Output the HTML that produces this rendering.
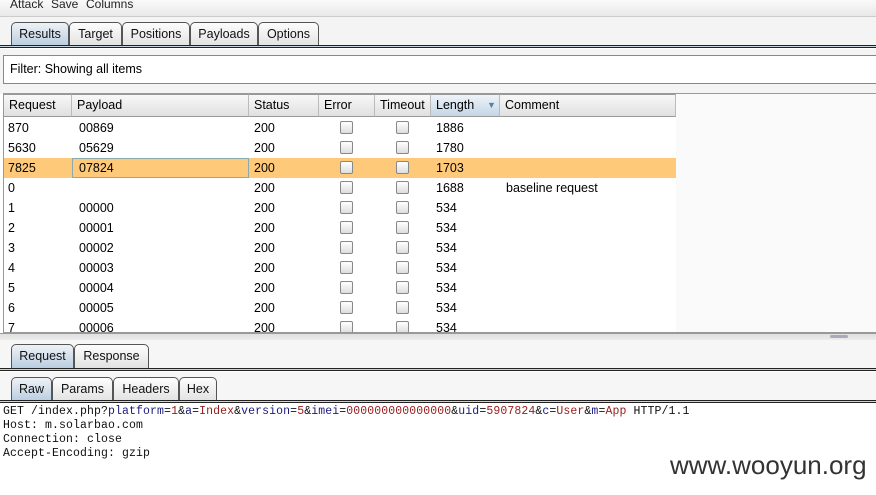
<!DOCTYPE html>
<html><head><style>
*{margin:0;padding:0;box-sizing:border-box}
body{width:876px;height:495px;overflow:hidden;background:#fff;font-family:"Liberation Sans",sans-serif;font-size:12px;color:#000;position:relative}
.abs{position:absolute}
.menu{left:0;top:0;width:876px;height:17px;background:linear-gradient(#fafafa,#e8e8e8);border-bottom:1px solid #ccc}
.menu span{position:absolute;top:-3px;font-size:12px;color:#222}
.tab{position:absolute;height:24px;border:1px solid #555;border-bottom:none;border-radius:5px 5px 0 0;background:linear-gradient(#fdfdfd,#e2e2e2);font-size:12.5px;text-align:center;line-height:22px;color:#111}
.tab.sel{background:linear-gradient(#eef2f6,#b9cde0)}
.bar{position:absolute;left:0;width:876px;height:3px;border-top:1px solid #222;border-bottom:1px solid #222;background:#c8d4e0}
.th{position:absolute;top:94px;height:23px;border-right:1px solid #bbb;background:linear-gradient(#f8f8f8,#e0e0e0);line-height:20px;padding-left:5px;font-size:12.5px;border-bottom:1px solid #999;border-top:1px solid #999}
.row{position:absolute;left:4px;width:672px;height:20px;font-size:12.5px;line-height:20px}
.row span{position:absolute}
.cb{position:absolute;width:13px;height:13px;border:1px solid #888;border-radius:2px;background:linear-gradient(#fff,#ddd);top:3px}
pre{position:absolute;left:3px;top:405px;font-family:"Liberation Mono",monospace;font-size:11.5px;letter-spacing:0.1px;line-height:14px;color:#111}
.k{color:#1a1a80}.v{color:#9a1a1a}
</style></head><body>
<div class="abs menu"><span style="left:10px">Attack</span><span style="left:51px">Save</span><span style="left:86px">Columns</span></div>
<div class="abs" style="left:0;top:17px;width:876px;height:30px;background:#f4f4f4"></div>
<div class="tab sel" style="left:11px;top:22px;width:58px">Results</div>
<div class="tab" style="left:69px;top:22px;width:53px">Target</div>
<div class="tab" style="left:122px;top:22px;width:68px">Positions</div>
<div class="tab" style="left:190px;top:22px;width:68px">Payloads</div>
<div class="tab" style="left:258px;top:22px;width:61px">Options</div>
<div class="bar" style="top:45px"></div>
<div class="abs" style="left:0;top:49px;width:876px;height:45px;background:#f4f4f4"></div>
<div class="abs" style="left:3px;top:55px;width:880px;height:29px;border:1px solid #888;background:#fff;padding:6px 0 0 6px;font-size:12.5px">Filter: Showing all items</div>
<div class="abs" style="left:3px;top:93px;width:880px;height:240px;border:1px solid #999;background:#fafafa"></div>
<div class="abs" style="left:4px;top:117px;width:672px;height:215px;background:#fff"></div>
<div class="th" style="left:4px;width:68px">Request</div>
<div class="th" style="left:72px;width:177px">Payload</div>
<div class="th" style="left:249px;width:70px">Status</div>
<div class="th" style="left:319px;width:56px">Error</div>
<div class="th" style="left:375px;width:56px">Timeout</div>
<div class="th" style="left:431px;width:69px;background:linear-gradient(#eef3f8,#c4d6e6)">Length<span style="position:absolute;left:56px;color:#5a7fa8;font-size:9px">▼</span></div>
<div class="th" style="left:500px;width:176px">Comment</div>
<div id="rows"></div>
<div class="abs" style="left:0;top:333px;width:876px;height:12px;background:linear-gradient(#e0e0e0,#f6f6f6);border-top:1px solid #999"></div>
<div class="abs" style="left:830px;top:335px;width:18px;height:3px;background:#aab;border-radius:2px"></div>
<div class="abs" style="left:0;top:340px;width:876px;height:30px;background:#f6f6f6"></div>
<div class="tab sel" style="left:11px;top:344px;width:63px">Request</div>
<div class="tab" style="left:74px;top:344px;width:75px">Response</div>
<div class="bar" style="top:368px"></div>
<div class="abs" style="left:0;top:372px;width:876px;height:30px;background:#f6f6f6"></div>
<div class="tab sel" style="left:11px;top:377px;width:41px">Raw</div>
<div class="tab" style="left:52px;top:377px;width:61px">Params</div>
<div class="tab" style="left:113px;top:377px;width:66px">Headers</div>
<div class="tab" style="left:179px;top:377px;width:38px">Hex</div>
<div class="bar" style="top:400px"></div>
<pre>GET /index.php?<span class="k">platform</span>=<span class="v">1</span>&amp;<span class="k">a</span>=<span class="v">Index</span>&amp;<span class="k">version</span>=<span class="v">5</span>&amp;<span class="k">imei</span>=<span class="v">000000000000000</span>&amp;<span class="k">uid</span>=<span class="v">5907824</span>&amp;<span class="k">c</span>=<span class="v">User</span>&amp;<span class="k">m</span>=<span class="v">App</span> HTTP/1.1
Host: m.solarbao.com
Connection: close
Accept-Encoding: gzip</pre>
<div class="abs" style="left:670px;top:450px;font-size:26px;color:#333">www.wooyun.org</div>
<script>
var d=[["870","00869","1886",""],["5630","05629","1780",""],["7825","07824","1703",""],["0","","1688","baseline request"],["1","00000","534",""],["2","00001","534",""],["3","00002","534",""],["4","00003","534",""],["5","00004","534",""],["6","00005","534",""],["7","00006","534",""]];
var h="";d.forEach(function(r,i){var t=118+i*20;var sel=i==2;var bot=Math.min(20,332-t);
h+='<div class="row" style="top:'+t+'px;height:'+bot+'px;overflow:hidden;'+(sel?'background:#ffc97a':'')+'">'+
(sel?'<div style="position:absolute;left:68px;top:0;width:177px;height:20px;border:1px solid #8aa"></div>':'')+
'<span style="left:4px">'+r[0]+'</span><span style="left:75px">'+r[1]+'</span><span style="left:250px">200</span><div class="cb" style="left:336px"></div><div class="cb" style="left:392px"></div><span style="left:432px">'+r[2]+'</span><span style="left:502px">'+r[3]+'</span></div>';});
document.getElementById("rows").innerHTML=h;
</script>
</body></html>
